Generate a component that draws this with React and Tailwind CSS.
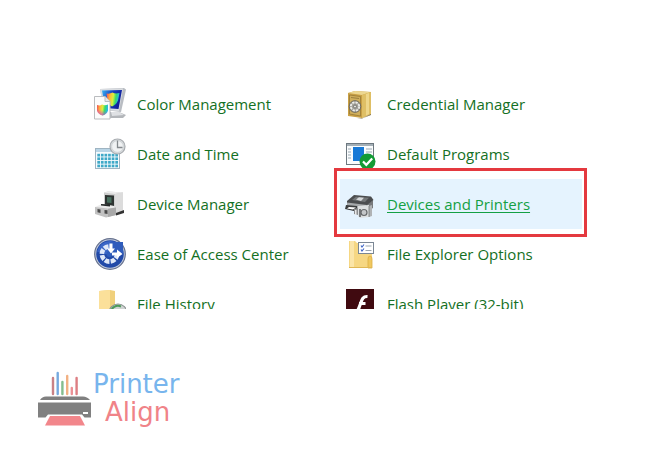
import clsx from 'clsx'

function Icon({ children }) {
  return (
    <svg viewBox="0 0 32 32" className="size-8 shrink-0" aria-hidden="true">
      {children}
    </svg>
  )
}

function ColorManagementIcon() {
  return (
    <Icon>
      <defs>
        <linearGradient id="rainbow" x1="0" y1="0" x2="1" y2="0.15">
          <stop offset="0" stopColor="#f04858" />
          <stop offset="0.3" stopColor="#ffb838" />
          <stop offset="0.55" stopColor="#d8f040" />
          <stop offset="0.75" stopColor="#38dc68" />
          <stop offset="1" stopColor="#28b8e8" />
        </linearGradient>
        <linearGradient id="violet" x1="0" y1="1" x2="0.3" y2="0">
          <stop offset="0" stopColor="#d030e0" stopOpacity="0.9" />
          <stop offset="0.6" stopColor="#d030e0" stopOpacity="0" />
        </linearGradient>
        <linearGradient id="screen" x1="0" y1="0" x2="1" y2="0.4">
          <stop offset="0" stopColor="#38b4f4" />
          <stop offset="0.5" stopColor="#1740c0" />
          <stop offset="1" stopColor="#101e98" />
        </linearGradient>
      </defs>
      <path d="M14 24L25 24L32 27L29 30L16 30Z" fill="#b3b6ba" />
      <path d="M17 24L25 24L30 27L18 28Z" fill="#dfe1e4" />
      <path d="M6 1L30 0L32 1.5L27 24L10 22Z" fill="#b9bdc3" />
      <path d="M6 1L29 0.5L25 23L10 22Z" fill="#dadde1" />
      <path d="M8 2.5L28 2L24.5 21L11 20Z" fill="url(#screen)" />
      <path d="M12.5 5.5Q16 6 18.5 4.5Q21 6 25.5 5L24 12.5Q22 17 18 18.5Q14 16 13.5 12.5Z" fill="url(#rainbow)" />
      <path d="M0.5 8.5H11L16 13.5V31H0.5Z" fill="#fcfcfc" stroke="#babcbf" />
      <path d="M11 8.5V13.5H16" fill="#e6e8ea" stroke="#babcbf" />
      <path d="M3 17Q6 18 8 16.5Q11 18 14 16.5V22.5Q13 26 8.5 27.5Q4 26 3 22.5Z" fill="url(#rainbow)" />
      <path d="M3 17Q6 18 8 16.5Q11 18 14 16.5V22.5Q13 26 8.5 27.5Q4 26 3 22.5Z" fill="url(#violet)" />
    </Icon>
  )
}

function DateTimeIcon() {
  const cols = [0, 1, 2, 3, 4, 5]
  const rows = [0, 1, 2, 3]
  return (
    <Icon>
      <rect x="1.5" y="10.5" width="24" height="20" fill="#f7fbfd" stroke="#9fb4c2" />
      <rect x="2" y="11" width="23" height="3" fill="#b9d5e6" />
      {rows.map(r =>
        cols.map(c => (
          <rect key={`${r}-${c}`} x={3.3 + c * 3.6} y={15.8 + r * 3.6} width="2.7" height="2.7" fill="#3fa9c8" />
        ))
      )}
      <circle cx="23.5" cy="8.5" r="7.5" fill="#d9dcde" stroke="#a8acb0" strokeWidth="1.2" />
      <circle cx="23.5" cy="8.5" r="5.8" fill="#f0f2f3" stroke="#c5c9cc" strokeWidth="0.6" />
      <path d="M23.5 2.5V9.5H28.5" fill="none" stroke="#84898d" strokeWidth="1.3" />
    </Icon>
  )
}

function DeviceManagerIcon() {
  return (
    <Icon>
      <path d="M10 4.5L14 3.5L29 4.5V24L21 27L10 22Z" fill="#cdcdcd" />
      <path d="M10 4.5L14 3.5L29 4.5L21 6Z" fill="#ececec" />
      <path d="M21 6L29 4.5V23L21 25Z" fill="#dcdcdc" />
      <path d="M22 25L30 22V25L22 27.5Z" fill="#323232" />
      <path d="M11 7L20 7.5V18L11 17Z" fill="#2d3331" />
      <path d="M13 9L17.5 9.2V15L13 14.5Z" fill="#48705f" />
      <path d="M1 19L8 16L20 18L22 20L14 22Z" fill="#ebebeb" />
      <path d="M1 19L14 20.5L22 19.5V27L12 29.5L1 26Z" fill="#c2c2c2" />
      <path d="M14 21L22 19.5V27L14 29Z" fill="#a9a9a9" />
      <path d="M7 16L16 16.5V18.5L7 17.5Z" fill="#262a29" />
      <path d="M3.5 21L6.5 21.5V25L3.5 24.2ZM10.5 22L13.5 22.3V26L10.5 25.4Z" fill="#4a4a4a" />
    </Icon>
  )
}

function EaseOfAccessIcon() {
  return (
    <Icon>
      <circle cx="16" cy="16" r="15.3" fill="#c2cbdc" stroke="#66718e" strokeWidth="1.2" />
      <circle cx="16" cy="16" r="13.8" fill="#2149a8" />
      <path d="M3 13.5A13.3 13.3 0 0 1 29 13.5Q16 19 3 13.5Z" fill="#3a66c6" />
      <circle
        cx="15.5"
        cy="16"
        r="7.6"
        fill="none"
        stroke="#dfe8f8"
        strokeWidth="4.6"
        strokeDasharray="4.7 1.27"
      />
      <circle cx="15.5" cy="16" r="3" fill="#2f5dbc" />
      <path d="M16 16V4H29V15Z" fill="#2f5cbc" />
      <path d="M15.5 5.5H18.5V10.5H21L17 15.5L13 10.5H15.5Z" fill="#fff" />
      <path d="M18 14.5H23V11.5L28.5 16L23 20V17.5H18Z" fill="#fff" />
    </Icon>
  )
}

function FileHistoryIcon() {
  return (
    <Icon>
      <path d="M5 3L16 2L21 3V32H5Z" fill="#f0d07c" />
      <path d="M5 3L16 2V32H5Z" fill="#fbe09a" />
      <circle cx="24" cy="25" r="9" fill="#cfd3d2" stroke="#8b9291" strokeWidth="1.2" />
      <path d="M17 25A7 7 0 0 1 27 18.5" fill="none" stroke="#4c9a5a" strokeWidth="2" />
    </Icon>
  )
}

function CredentialManagerIcon() {
  return (
    <Icon>
      <path d="M4 5L11 3L27 4V26L18 30L4 28Z" fill="#c9a046" />
      <path d="M4 5L11 3L27 4L18 7Z" fill="#edd790" />
      <path d="M18 7L27 4V26L18 30Z" fill="#dfbf65" />
      <path d="M22 6L25 5V26L22 27.5Z" fill="#efd78b" />
      <path d="M5.5 7L16.5 8.5V28L5.5 26Z" fill="#cfae5c" stroke="#987a35" strokeWidth="0.8" />
      <circle cx="11" cy="18.5" r="5.8" fill="#a3a19b" stroke="#6b6860" />
      <circle cx="11" cy="18.5" r="4.2" fill="none" stroke="#eeeeea" strokeWidth="1.8" strokeDasharray="2.2 1.1" />
      <circle cx="11" cy="18.5" r="1.5" fill="#e2e2de" stroke="#5c5a54" strokeWidth="0.7" />
      <path d="M7 9.5L15 10.5" stroke="#9c8140" strokeWidth="1" />
      <path d="M27 26L19 30H13L18 30.6L27 27Z" fill="#76643a" />
    </Icon>
  )
}

function DefaultProgramsIcon() {
  return (
    <Icon>
      <rect x="2.5" y="5.5" width="27" height="21" fill="#fafcfd" stroke="#6d7880" />
      <rect x="3" y="6" width="26" height="2" fill="#a4afb6" />
      <rect x="9" y="9" width="11" height="14" fill="#1879d6" />
      <path d="M4 11H7M4 14H7M4 17H7M4 20H7M22 11H28M22 14H28" stroke="#9ba9b3" strokeWidth="1" />
      <circle cx="23.5" cy="23.5" r="8" fill="#139b35" />
      <path d="M19 23.5L22.3 26.8L28.2 20.5" fill="none" stroke="#fff" strokeWidth="2.2" />
    </Icon>
  )
}

function DevicesPrintersIcon() {
  return (
    <Icon>
      <path d="M3 13L27 15V23L20 25L3 21Z" fill="#a6a9ab" />
      <path d="M22 17L29 12V20L22 24Z" fill="#777a7c" />
      <path d="M3 13L10 7L27 8.5L29.5 12L23 17L3 14.5Z" fill="#4b4d4f" />
      <path d="M8 12L12 8.7L25 9.8L21 14Z" fill="#737678" />
      <path d="M12 11.5L15 9.3L20 9.8L17 13Z" fill="#d5d8da" />
      <path d="M2 17L13 18V20.5L10 23L1 21Z" fill="#3b3d3e" />
      <path d="M5 19L12 19.5L9 21.5L3 20.5Z" fill="#fff" />
      <path d="M10 21L14 20V27L10 26Z" fill="#8b8d8f" />
      <path d="M11 22H12.5V27H11Z" fill="#e8e8e8" />
      <path d="M14 18L25 17V29L16 30L14 28Z" fill="#dcdfe0" />
      <path d="M15 21H17V29H15Z" fill="#75787a" />
      <circle cx="20" cy="24.5" r="3" fill="#c4c7c9" stroke="#66696b" strokeWidth="1.2" />
      <path d="M25 18L28 17V28L25 29Z" fill="#b0b3b5" />
      <path d="M25 18V29" stroke="#707375" strokeWidth="0.8" />
    </Icon>
  )
}

function FileExplorerIcon() {
  return (
    <Icon>
      <path d="M5 3H11L13 5H28V30H5Z" fill="#f6d783" />
      <path d="M6 3H10V29H6Z" fill="#fbe5a8" />
      <path d="M24 21Q24 18 26 18Q28 18 28 21V30H24Z" fill="#f0c860" stroke="#dcae45" strokeWidth="0.8" />
      <path d="M5 29.5H28" stroke="#dfb756" />
      <rect x="14.5" y="4.5" width="15" height="11" fill="#fff" stroke="#7b8794" />
      <path d="M17 7.5L18 9L20 6.5M17 11.5L18 13L20 10.5" fill="none" stroke="#3b62c4" strokeWidth="1.1" />
      <path d="M21.5 8H27.5M21.5 12.5H27.5" stroke="#9ba5ae" strokeWidth="1" />
    </Icon>
  )
}

function FlashPlayerIcon() {
  return (
    <Icon>
      <rect x="2" y="1" width="28" height="31" fill="#400a10" />
      <path d="M23.5 8.5C18.5 8.2 17.8 12 16 17C14.5 21.5 13.5 25 9.5 26M15 15.5H21.5" fill="none" stroke="#fff" strokeWidth="3.2" />
    </Icon>
  )
}

const items = [
  { label: 'Color Management', icon: ColorManagementIcon },
  { label: 'Credential Manager', icon: CredentialManagerIcon },
  { label: 'Date and Time', icon: DateTimeIcon },
  { label: 'Default Programs', icon: DefaultProgramsIcon },
  { label: 'Device Manager', icon: DeviceManagerIcon },
  { label: 'Devices and Printers', icon: DevicesPrintersIcon, active: true },
  { label: 'Ease of Access Center', icon: EaseOfAccessIcon },
  { label: 'File Explorer Options', icon: FileExplorerIcon },
  { label: 'File History', icon: FileHistoryIcon },
  { label: 'Flash Player (32-bit)', icon: FlashPlayerIcon },
]

function PanelItem({ label, icon: ItemIcon, active }) {
  return (
    <li className={clsx('relative', active && 'bg-[#e5f3fe]')}>
      <a
        href="#"
        className={clsx(
          'flex h-[50px] items-center gap-[11px] pl-1 text-[15px] whitespace-nowrap',
          active ? 'text-[#14a044] underline underline-offset-2' : 'text-[#147024]'
        )}
      >
        <ItemIcon />
        {label}
      </a>
      {active && (
        <span className="pointer-events-none absolute -top-[11px] -bottom-2 -left-1.5 -right-[5px] border-3 border-[#e4393f]" />
      )}
    </li>
  )
}

function Logo() {
  return (
    <div className="flex items-start gap-px">
      <svg viewBox="0 0 55 57" className="h-[57px] w-[55px] shrink-0" aria-hidden="true">
        <g strokeWidth="2.4" strokeLinecap="round">
          <path d="M16 8V24" stroke="#c98286" />
          <path d="M20.7 3V24" stroke="#75a9df" />
          <path d="M25.4 12V24" stroke="#84bd8e" />
          <path d="M30.2 6V24" stroke="#f2b183" />
          <path d="M34.8 18V24" stroke="#ec9297" />
          <path d="M39.6 8V24" stroke="#dd7e83" />
        </g>
        <path d="M3 30Q5 26.5 9 26.5H46Q50 26.5 53 30Z" fill="#808080" />
        <path d="M1 32.5H54V47.5H47.5L45 44.5H11L8.5 47.5H1Z" fill="#808080" />
        <rect x="46" y="42" width="5" height="2" fill="#fff" />
        <path d="M13 46H43L48 55.5H8Z" fill="#f2868b" />
      </svg>
      <div className="font-['DejaVu_Sans'] text-[26px] leading-7">
        <div className="text-[#78b5ed]">Printer</div>
        <div className="ml-3 text-[#f08388]">Align</div>
      </div>
    </div>
  )
}

export default function App() {
  return (
    <div className="min-h-screen bg-white font-['Open_Sans','Noto_Sans',sans-serif]">
      <main className="pt-[79px] pr-[68px] pl-[90px]">
        <ul className="grid max-h-[230px] grid-cols-2 gap-x-2 overflow-y-clip">
          {items.map(item => (
            <PanelItem key={item.label} {...item} />
          ))}
        </ul>
      </main>
      <footer className="px-[37px] pt-[61px]">
        <Logo />
      </footer>
    </div>
  )
}
